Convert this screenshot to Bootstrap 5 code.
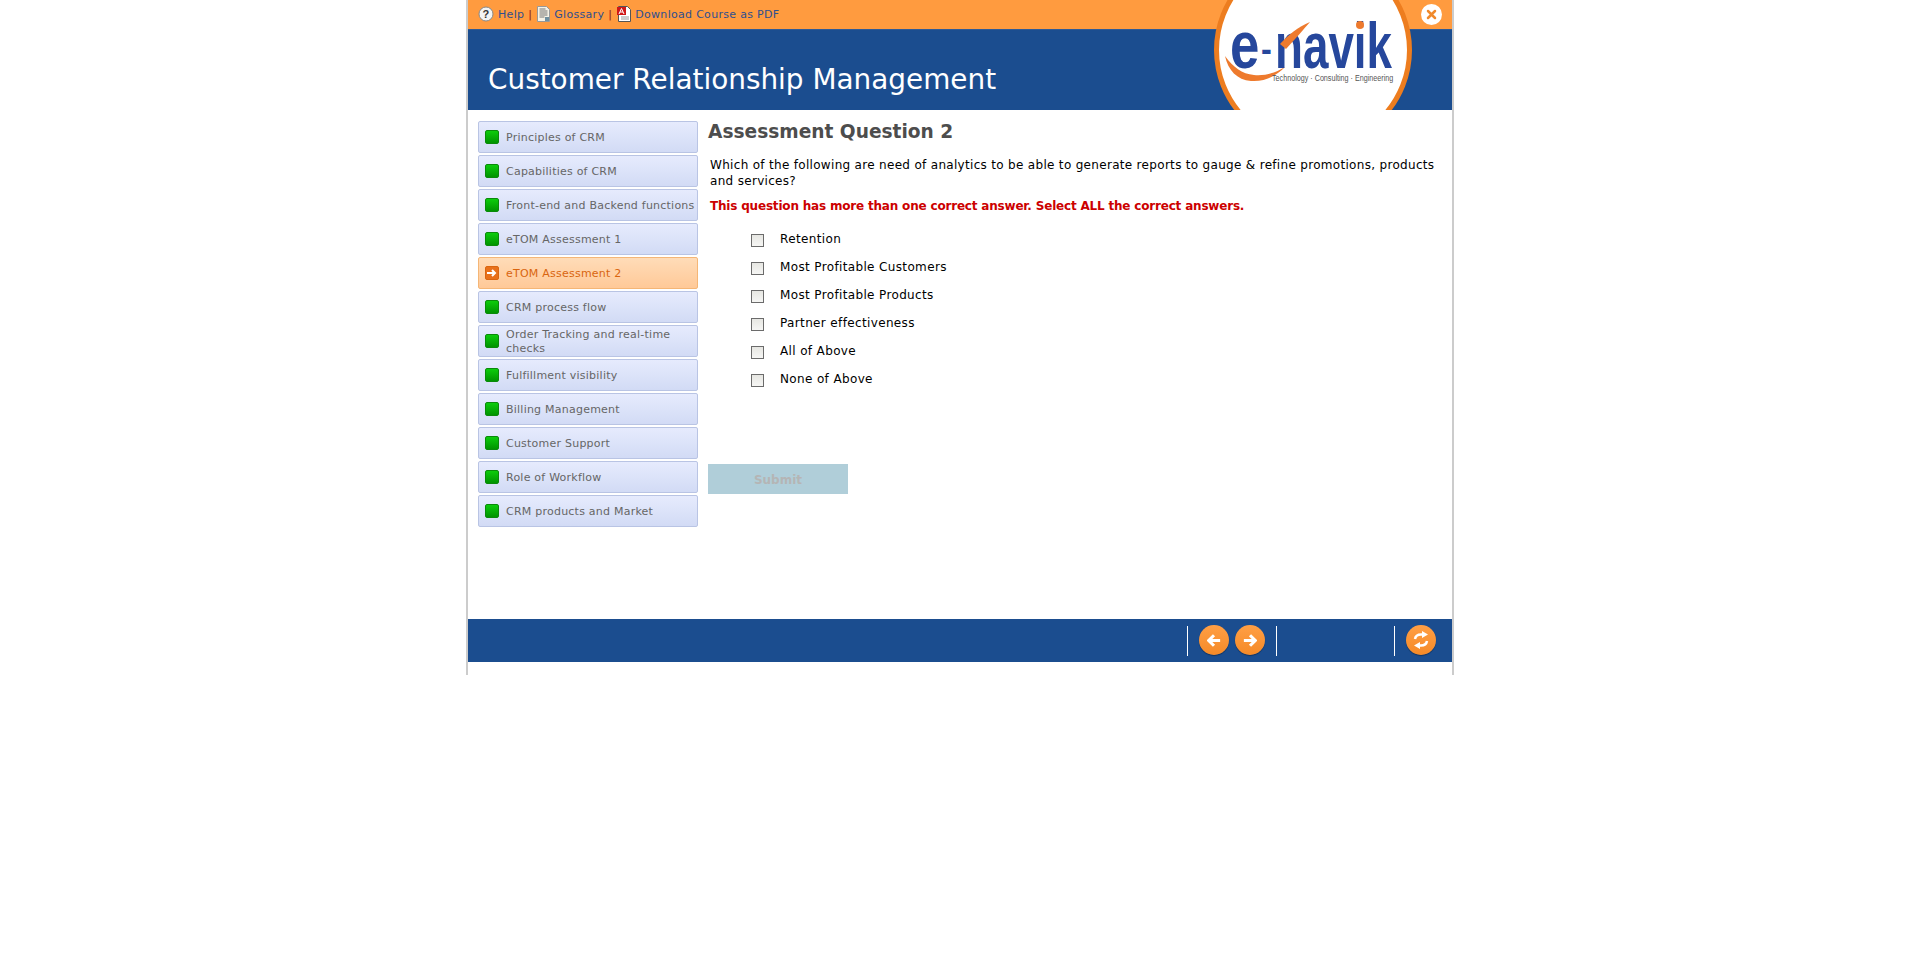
<!DOCTYPE html>
<html lang="en">
<head>
  <meta charset="UTF-8">
  <title>Customer Relationship Management</title>
  <link rel="stylesheet" href="https://cdn.jsdelivr.net/npm/bootstrap@5.3.0/dist/css/bootstrap.min.css">
  <script src="https://cdn.jsdelivr.net/npm/bootstrap@5.3.0/dist/js/bootstrap.bundle.min.js"></script>
  <style>
    body { background: #fff; font-family: "DejaVu Sans", Verdana, sans-serif; font-size: 12px; color: #000; }
    .course-shell { width: 988px; height: 675px; border-left: 2px solid #ccc; border-right: 2px solid #ccc; }
    .head-wrap { height: 110px; overflow: hidden; }
    .tool-bar { height: 29px; background: #ff9b3f; padding-left: 10px; font-size: 11px; letter-spacing: .3px; color: #8b1a1a; }
    .tool-bar a { color: #2f4f8f; text-decoration: none; padding-top: 2px; }
    .tool-bar svg { margin-top: -2px; }
    .tool-sep { padding-top: 2px; margin: 0 5px 0 4px; }
    .title-bar { height: 81px; background: #1b4d8f; color: #fff; font-size: 27.9px; padding: 30px 250px 0 20px; line-height: 40px; border-top: 1px solid #2f5a94; white-space: nowrap; }
    .logo-disc { position: absolute; left: 746px; top: -49px; width: 198px; height: 198px; border-radius: 50%; background: #fff; border: 5px solid #ed7d1f; }
    .logo-art { position: absolute; left: 746px; top: 0; }
    .logo-art text { font-family: "Liberation Sans", sans-serif; }
    .close-btn { position: absolute; right: 10px; top: 4px; width: 21px; height: 21px; border-radius: 50%; background: #fff; }
    .body-wrap { height: 509px; }
    .side-col { width: 240px; padding: 11px 10px 0; flex: none; }
    .side-item { display: flex; align-items: center; height: 32px; margin-bottom: 2px; width: 220px; border: 1px solid #b9c4e4; border-radius: 2px; background: linear-gradient(#e6ebfd, #d2dbf5); color: #666; font-size: 11px; letter-spacing: .23px; line-height: 14px; text-decoration: none; padding: 2px 0 0 6px; }
    .side-item.is-current { background: linear-gradient(#ffdcb8, #ffc998); border-color: #f5b676; color: #d9650f; }
    .side-mark { width: 14px; height: 14px; flex: none; margin: -2px 7px 0 0; border-radius: 2px; border: 1px solid #0a8a0a; background: linear-gradient(#0ccc0c, #009400); }
    .side-mark.is-arrow { background: #e8701a; border-color: #d9650f; display: flex; align-items: center; justify-content: center; }
    .main-col { flex: 1; }
    .q-title { font-size: 18.6px; font-weight: 700; color: #4d4d4d; margin: 0; line-height: 24px; padding-top: 10px; }
    .q-text { padding-left: 2px; margin: 13px 0 0; font-size: 12px; letter-spacing: .31px; line-height: 16px; width: 736px; }
    .q-note { padding-left: 2px; margin: 9px 0 0; font-size: 12px; line-height: 16px; font-weight: 700; letter-spacing: -.19px; color: #c00; }
    .opt-list { padding-left: 43px; margin-top: 11px; }
    .opt-row { height: 28px; display: flex; align-items: center; font-size: 12px; letter-spacing: .36px; }
    .opt-box { width: 13px; height: 13px; border: 1px solid #6b6b6b; background: linear-gradient(#e6e6e2, #f6f6f4); margin-right: 16px; margin-top: 2px; flex: none; }
    .submit-btn { width: 140px; height: 30px; margin-top: 71px; background: #b0ced9; border: 0; color: #b5b5b5; font-weight: 700; font-size: 12px; font-family: inherit; display: block; padding: 2px 0 0; }
    .foot-bar { height: 43px; background: #1b4d8f; position: relative; }
    .foot-div { position: absolute; top: 7px; width: 1px; height: 30px; background: #fff; }
    .round-btn { position: absolute; top: 6px; width: 30px; height: 30px; border-radius: 50%; background: linear-gradient(#ff9f45, #f58a28); box-shadow: 0 1px 1px rgba(0,0,0,.35); display: flex; align-items: center; justify-content: center; }
  </style>
</head>
<body class="m-0">
  <div class="course-shell mx-auto position-relative">
    <div class="head-wrap position-relative">
      <div class="tool-bar d-flex align-items-center">
        <svg width="16" height="16" viewBox="0 0 16 16" class="me-1"><circle cx="8" cy="8" r="7" fill="#f4f4f4" stroke="#888"/><text x="8" y="12" font-size="11" font-weight="700" text-anchor="middle" fill="#333" font-family="Liberation Sans">?</text></svg>
        <a href="#">Help</a><span class="tool-sep">|</span>
        <svg width="13" height="16" viewBox="0 0 13 16"><path d="M.5.5h9l3 3v12H.5z" fill="#f5f2e6" stroke="#999"/><path d="M2.500 3h6M2.500 5h8M2.500 7h8M2.500 9h8M2.500 11h5" stroke="#777"/><path d="M8 11h4v4H8z" fill="#6f8f9f"/></svg>
        <a href="#" class="ms-1">Glossary</a><span class="tool-sep">|</span>
        <svg width="14" height="16" viewBox="0 0 14 16"><path d="M1.500.5h9l3 3v12h-12z" fill="#fff" stroke="#555"/><path d="M0 1h9v8H0z" fill="#d01818"/><path d="M2 8l2.500-5.500L7 8M3 6h3" stroke="#fff" fill="none"/><path d="M4 11h8M4 13h8" stroke="#999"/></svg>
        <a href="#" class="ms-1">Download Course as PDF</a>
      </div>
      <div class="title-bar">Customer Relationship Management</div>
      <div class="logo-disc"></div>
      <svg class="logo-art" width="198" height="110" viewBox="0 0 198 110">
        <path d="M11 56c3 14 12 24 26 25 14 1 25-5 34-14-10 6-20 9-31 8-12-1-21-8-29-19z" fill="#ee7a2d"/>
        <text transform="translate(16 68) scale(.8 1)" font-weight="700" font-size="66" fill="#26479c">e</text>
        <text transform="translate(47 61) scale(.9 1)" font-weight="700" font-size="36" fill="#26479c">-</text>
        <text transform="translate(61 68) scale(.715 1)" font-weight="700" font-size="64" fill="#26479c">navik</text>
        <path d="M66 44c8-9 18-17 30-22-7 8-14 16-24 27z" fill="#ee7a2d"/>
        <circle cx="146" cy="25" r="4" fill="#ee7a2d"/>
        <text transform="translate(58 81) scale(.8 1)" font-size="9" fill="#555">Technology · Consulting · Engineering</text>
      </svg>
      <div class="close-btn d-flex align-items-center justify-content-center">
        <svg width="11" height="11" viewBox="0 0 11 11"><path d="M2 2l7 7M9 2l-7 7" stroke="#f08a2c" stroke-width="2.500" stroke-linecap="round"/></svg>
      </div>
    </div>

    <div class="body-wrap d-flex">
      <div class="side-col">
        <a class="side-item" href="#"><span class="side-mark"></span>Principles of CRM</a>
        <a class="side-item" href="#"><span class="side-mark"></span>Capabilities of CRM</a>
        <a class="side-item" href="#"><span class="side-mark"></span>Front-end and Backend functions</a>
        <a class="side-item" href="#"><span class="side-mark"></span>eTOM Assessment 1</a>
        <a class="side-item is-current" href="#"><span class="side-mark is-arrow"><svg width="10" height="8" viewBox="0 0 10 8"><path d="M0 4h7M5 1l3 3-3 3" stroke="#fff" stroke-width="2" fill="none"/></svg></span>eTOM Assessment 2</a>
        <a class="side-item" href="#"><span class="side-mark"></span>CRM process flow</a>
        <a class="side-item" href="#"><span class="side-mark"></span>Order Tracking and real-time checks</a>
        <a class="side-item" href="#"><span class="side-mark"></span>Fulfillment visibility</a>
        <a class="side-item" href="#"><span class="side-mark"></span>Billing Management</a>
        <a class="side-item" href="#"><span class="side-mark"></span>Customer Support</a>
        <a class="side-item" href="#"><span class="side-mark"></span>Role of Workflow</a>
        <a class="side-item" href="#"><span class="side-mark"></span>CRM products and Market</a>
      </div>
      <div class="main-col">
        <h2 class="q-title">Assessment Question 2</h2>
        <p class="q-text">Which of the following are need of analytics to be able to generate reports to gauge &amp; refine promotions, products and services?</p>
        <p class="q-note">This question has more than one correct answer. Select ALL the correct answers.</p>
        <div class="opt-list">
          <div class="opt-row"><span class="opt-box"></span>Retention</div>
          <div class="opt-row"><span class="opt-box"></span>Most Profitable Customers</div>
          <div class="opt-row"><span class="opt-box"></span>Most Profitable Products</div>
          <div class="opt-row"><span class="opt-box"></span>Partner effectiveness</div>
          <div class="opt-row"><span class="opt-box"></span>All of Above</div>
          <div class="opt-row"><span class="opt-box"></span>None of Above</div>
        </div>
        <button class="submit-btn" type="button" disabled>Submit</button>
      </div>
    </div>

    <div class="foot-bar">
      <span class="foot-div" style="left: 719px"></span>
      <span class="round-btn" style="left: 731px"><svg width="14" height="13" viewBox="0 0 16 14"><path d="M15 7H3M8 1L2 7l6 6" stroke="#fff" stroke-width="3.500" fill="none"/></svg></span>
      <span class="round-btn" style="left: 767px"><svg width="14" height="13" viewBox="0 0 16 14"><path d="M1 7h12M8 1l6 6-6 6" stroke="#fff" stroke-width="3.500" fill="none"/></svg></span>
      <span class="foot-div" style="left: 808px"></span>
      <span class="foot-div" style="left: 926px"></span>
      <span class="round-btn" style="left: 938px"><svg width="18" height="18" viewBox="0 0 18 18"><path d="M3 8c.5-3 3-4.500 6-4.500h2M15 10c-.5 3-3 4.500-6 4.500H7" stroke="#fff" stroke-width="2.500" fill="none"/><path d="M10 0l6 3.500-6 3.500zM8 11l-6 3.500 6 3.500z" fill="#fff"/></svg></span>
    </div>
  </div>
</body>
</html>
